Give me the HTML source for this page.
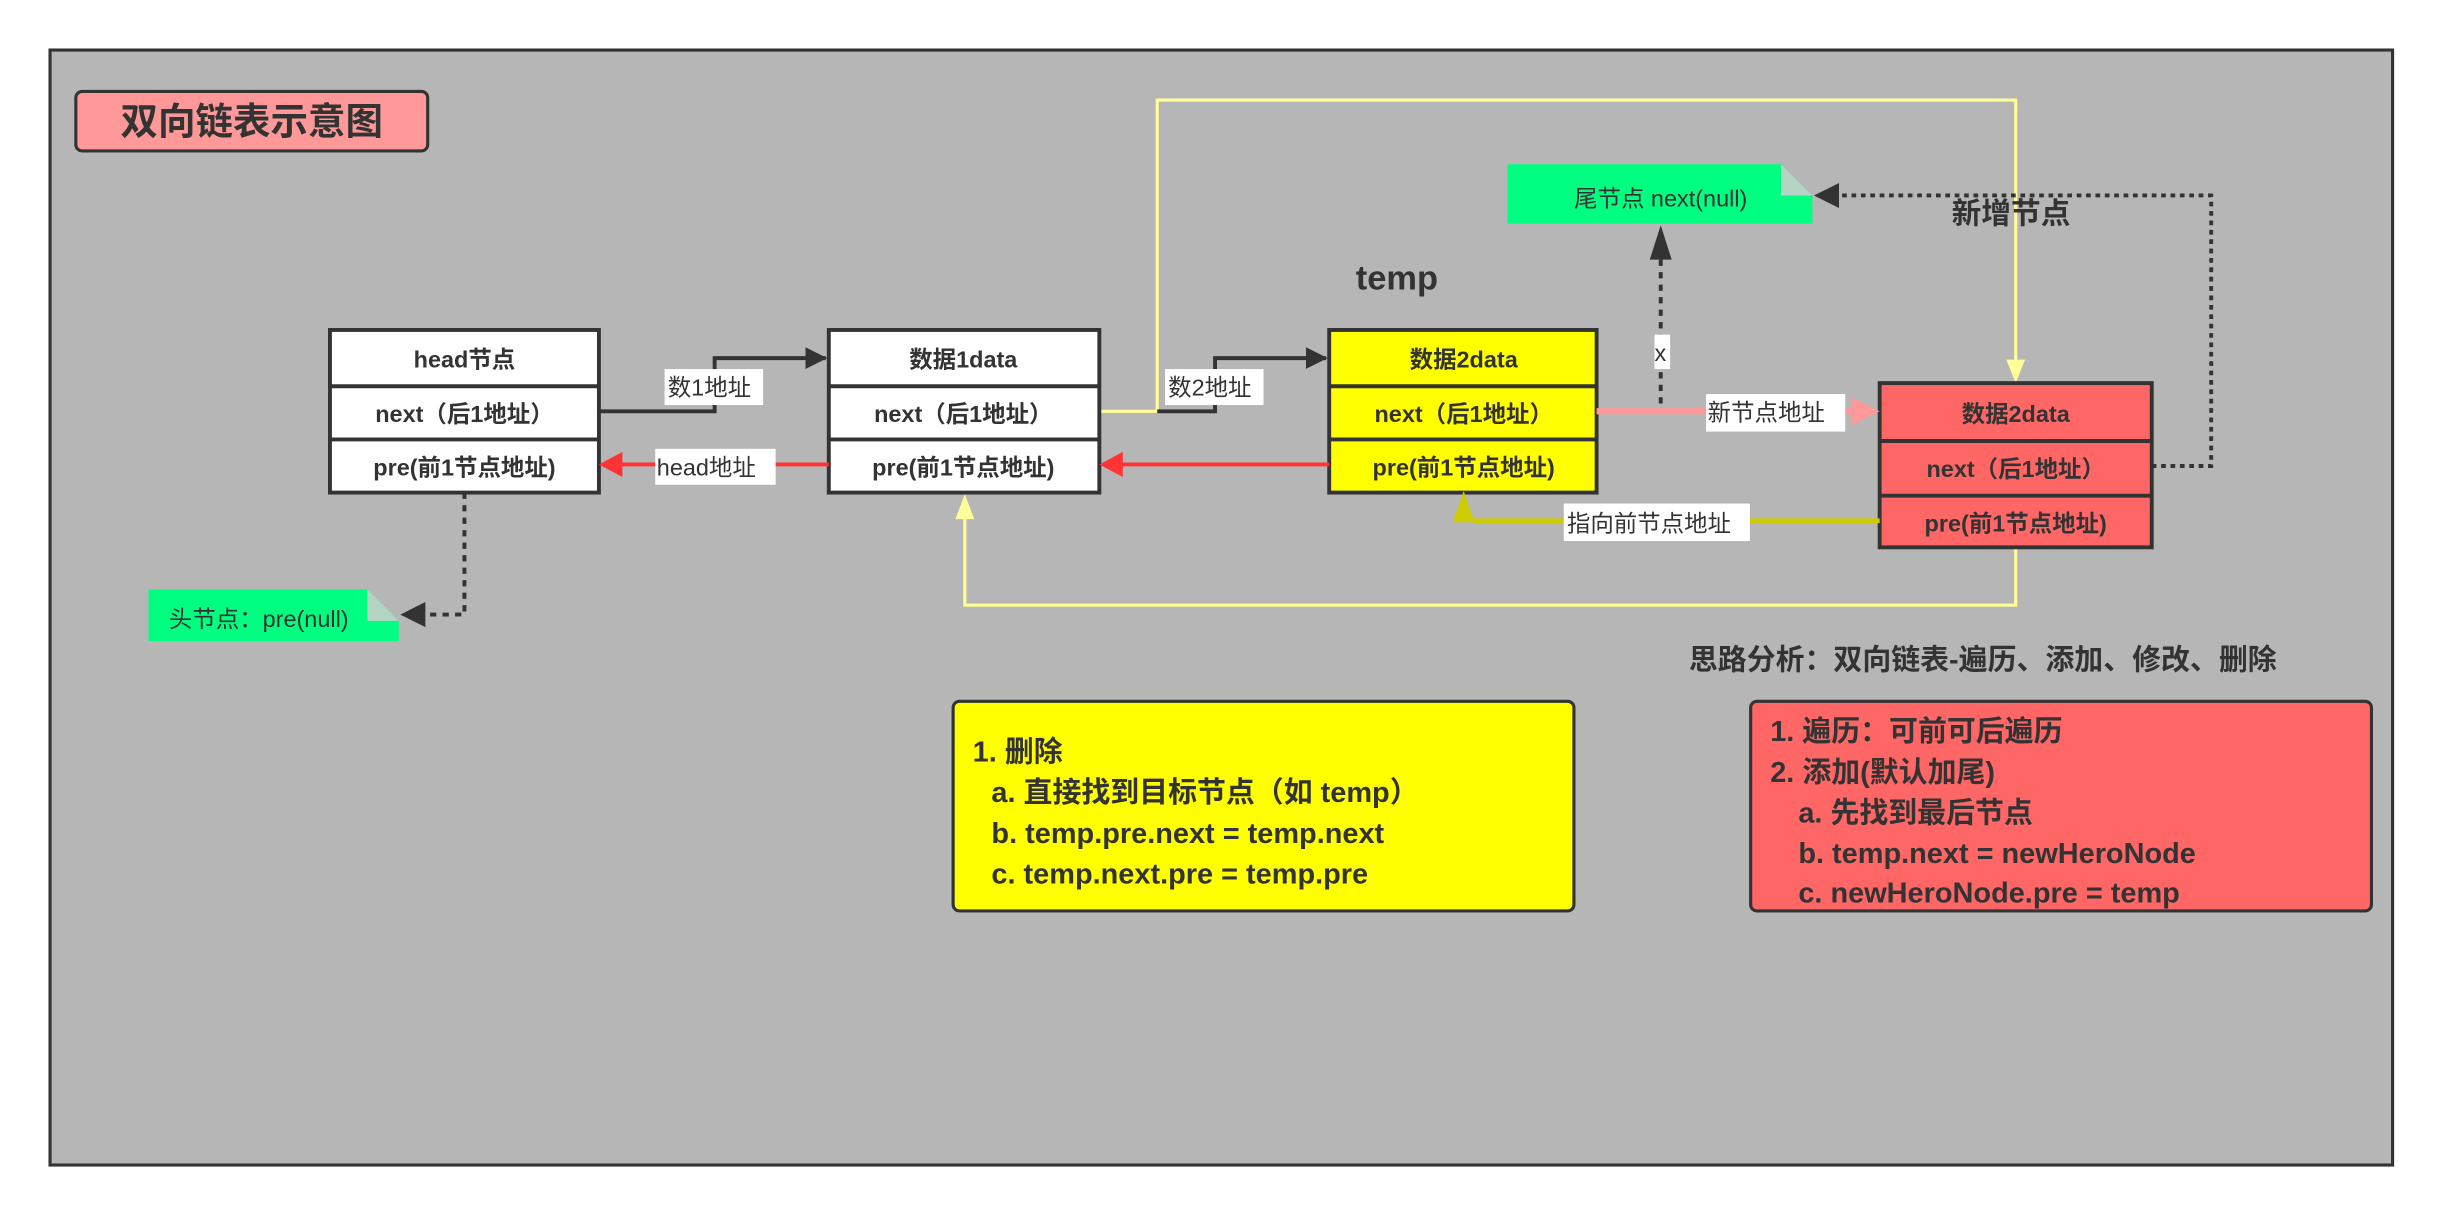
<!DOCTYPE html>
<html><head><meta charset="utf-8"><style>
html,body{margin:0;padding:0;background:#fff;}
svg{display:block;}
text{font-family:"Liberation Sans","Noto Sans CJK SC",sans-serif;fill:#333;}
.b{font-weight:bold;}
</style></head><body>
<svg width="2452" height="1216" viewBox="0 0 1568 777.6" xmlns="http://www.w3.org/2000/svg">
<defs>
<marker id="ad" markerWidth="14" markerHeight="14" refX="13" refY="7" orient="auto" markerUnits="userSpaceOnUse"><path d="M0,0 L14,7 L0,14 Z" fill="#333"/></marker>
</defs>
<rect x="0" y="0" width="1568" height="778" fill="#fff"/>
<rect x="32" y="32" width="1498" height="713" fill="#b6b6b6" stroke="#333" stroke-width="2"/>
<rect x="48.5" y="58.5" width="225" height="38" rx="4" fill="#ff9999" stroke="#333" stroke-width="2"/>
<text x="161" y="86" class="b" font-size="24" text-anchor="middle">双向链表示意图</text>

<path d="M703,263 H740 V64 H1289 V238" fill="none" stroke="#ffff99" stroke-width="2"/>
<path d="M1283,230 L1289,245 L1295,230 Z" fill="#ffff99"/>
<path d="M1289,350 V387 H617 V323" fill="none" stroke="#ffff99" stroke-width="2"/>
<path d="M611,332 L617,316 L623,332 Z" fill="#ffff99"/>

<g stroke="#333" stroke-width="2.5">
<rect x="211" y="211" width="172" height="104" fill="#fff"/>
<line x1="211" y1="247" x2="383" y2="247"/><line x1="211" y1="281" x2="383" y2="281"/>
<rect x="530" y="211" width="173" height="104" fill="#fff"/>
<line x1="530" y1="247" x2="703" y2="247"/><line x1="530" y1="281" x2="703" y2="281"/>
<rect x="850" y="211" width="171" height="104" fill="#ffff00"/>
<line x1="850" y1="247" x2="1021" y2="247"/><line x1="850" y1="281" x2="1021" y2="281"/>
<rect x="1202" y="245" width="174" height="105" fill="#ff6666"/>
<line x1="1202" y1="282" x2="1376" y2="282"/><line x1="1202" y1="317" x2="1376" y2="317"/>
</g>
<g class="b" font-size="15" text-anchor="middle">
<text x="297" y="235" class="b">head节点</text>
<text x="297" y="270" class="b">next（后1地址）</text>
<text x="297" y="304" class="b">pre(前1节点地址)</text>
<text x="616" y="235" class="b">数据1data</text>
<text x="616" y="270" class="b">next（后1地址）</text>
<text x="616" y="304" class="b">pre(前1节点地址)</text>
<text x="936" y="235" class="b">数据2data</text>
<text x="936" y="270" class="b">next（后1地址）</text>
<text x="936" y="304" class="b">pre(前1节点地址)</text>
<text x="1289" y="270" class="b">数据2data</text>
<text x="1289" y="305" class="b">next（后1地址）</text>
<text x="1289" y="340" class="b">pre(前1节点地址)</text>
</g>

<path d="M383,263 H457 V229 H528" fill="none" stroke="#333" stroke-width="2.5" marker-end="url(#ad)"/>
<path d="M740,263 H777 V229 H848" fill="none" stroke="#333" stroke-width="2.5" marker-end="url(#ad)"/>
<line x1="530" y1="297" x2="396" y2="297" stroke="#ff3333" stroke-width="2.5"/>
<path d="M398,289 L383,297 L398,305 Z" fill="#ff3333"/>
<line x1="850" y1="297" x2="716" y2="297" stroke="#ff3333" stroke-width="2.5"/>
<path d="M718,289 L703,297 L718,305 Z" fill="#ff3333"/>
<line x1="1021" y1="263" x2="1185" y2="263" stroke="#ff9999" stroke-width="4"/>
<path d="M1184,254 L1202,263 L1184,272 Z" fill="#ff9999"/>
<line x1="1202" y1="333" x2="942" y2="333" stroke="#cccc00" stroke-width="3"/>
<path d="M929,334 L936,314 L943,334 Z" fill="#cccc00"/>
<path d="M297,315 V393 H270" fill="none" stroke="#333" stroke-width="2.5" stroke-dasharray="4,4"/>
<path d="M272,385 L256,393 L272,401 Z" fill="#333"/>
<path d="M1062,258 V158" fill="none" stroke="#333" stroke-width="2.5" stroke-dasharray="4,4"/>
<path d="M1055,166 L1062,144 L1069,166 Z" fill="#333"/>
<path d="M1376,298 H1414 V125 H1175" fill="none" stroke="#333" stroke-width="2.5" stroke-dasharray="3,3"/>
<path d="M1176,117 L1160,125 L1176,133 Z" fill="#333"/>

<g font-size="15">
<rect x="425" y="236" width="63" height="23" fill="#fff"/><text x="427" y="253">数1地址</text>
<rect x="745" y="236" width="63" height="23" fill="#fff"/><text x="747" y="253">数2地址</text>
<rect x="419" y="287" width="77" height="23" fill="#fff"/><text x="420" y="304">head地址</text>
<rect x="1058" y="214" width="10" height="22" fill="#fff"/><text x="1058" y="231">x</text>
<rect x="1091" y="252" width="89" height="24" fill="#fff"/><text x="1092" y="269">新节点地址</text>
<rect x="1000" y="322" width="119" height="24" fill="#fff"/><text x="1002" y="340">指向前节点地址</text>
</g>

<path d="M964,105 H1139 L1159,125 V143 H964 Z" fill="#00ff80"/>
<path d="M1139,105 L1159,125 H1139 Z" fill="#b4d4c4"/>
<text x="1062" y="132" font-size="15" text-anchor="middle">尾节点 next(null)</text>
<path d="M95,377 H235 L255,397 V410 H95 Z" fill="#00ff80"/>
<path d="M235,377 L255,397 H235 Z" fill="#b4d4c4"/>
<text x="108" y="401" font-size="15">头节点：pre(null)</text>

<text x="867" y="185" class="b" font-size="22">temp</text>
<text x="1248" y="143" class="b" font-size="19">新增节点</text>
<text x="1080" y="428" class="b" font-size="18.5">思路分析：双向链表-遍历、添加、修改、删除</text>

<rect x="609.5" y="448.5" width="397" height="134" rx="4" fill="#ffff00" stroke="#333" stroke-width="2"/>
<g font-size="18.5">
<text x="622" y="487" class="b">1. 删除</text>
<text x="634" y="513" class="b">a. 直接找到目标节点（如 temp）</text>
<text x="634" y="539" class="b">b. temp.pre.next = temp.next</text>
<text x="634" y="565" class="b">c. temp.next.pre = temp.pre</text>
</g>
<rect x="1119.5" y="448.5" width="397" height="134" rx="4" fill="#ff6666" stroke="#333" stroke-width="2"/>
<g font-size="18.5">
<text x="1132" y="474" class="b">1. 遍历：可前可后遍历</text>
<text x="1132" y="500" class="b">2. 添加(默认加尾)</text>
<text x="1150" y="526" class="b">a. 先找到最后节点</text>
<text x="1150" y="552" class="b">b. temp.next = newHeroNode</text>
<text x="1150" y="577" class="b">c. newHeroNode.pre = temp</text>
</g>
</svg>
</body></html>
